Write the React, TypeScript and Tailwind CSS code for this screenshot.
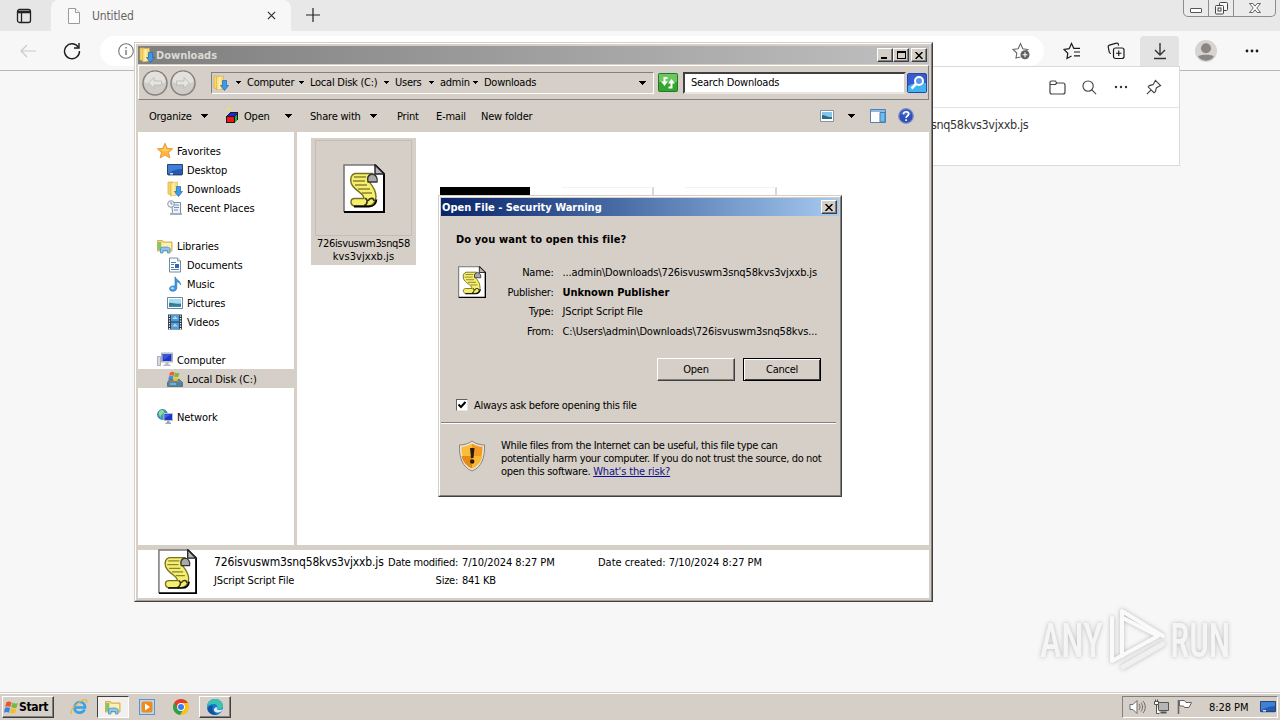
import React from "react";
import clsx from "clsx";

type IconProps = { className?: string };

/* ---------- shared icons ---------- */

function Caret({ className }: IconProps) {
  return (
    <svg viewBox="0 0 7 4" className={clsx("shrink-0", className)} shapeRendering="crispEdges">
      <path d="M0 0h7L3.500 4z" fill="#000" />
    </svg>
  );
}

function ScriptIcon({ className }: IconProps) {
  return (
    <svg viewBox="0 0 42 49" preserveAspectRatio="none" className={clsx("shrink-0", className)}>
      <path d="M1 1h31l9 9v38H1z" fill="#fff" />
      <path d="M32 1H1v47" fill="none" stroke="#777" strokeWidth="1.600" />
      <path d="M32 1l9 9v38H1" fill="none" stroke="#000" strokeWidth="2" />
      <path d="M32 1v9h9z" fill="#b8b8b8" stroke="#222" strokeWidth="1.400" />
      <path
        d="M12 9.500h16c-3 2-4 5-2 8 3 4 7 8 7 15 0 6-4 9.500-8 9.500H11c-4-1-4-7 0-7.500h10c0-6-11-8-13-16-1-5 1-8 4-9z"
        fill="#f5ef70"
        stroke="#77701f"
        strokeWidth="1.400"
      />
      <path d="M25 18c-1-4 0-7 4-8 4 0 6 5 5 8z" fill="#a9a9a9" stroke="#333" strokeWidth="1.300" />
      <path d="M11 13h12M10 17h12M12 21h12M15 25h12M19 29h10" stroke="#8a8330" strokeWidth="1.400" />
      <path d="M22 34.500c3 0 3 6-1 7M25 37c2-4 6-3 6 0" fill="none" stroke="#3a3510" strokeWidth="1.600" />
      <path d="M11 42.500h15c5 0 7-3 7.500-7" fill="none" stroke="#000" strokeWidth="1.800" />
    </svg>
  );
}

function DownloadsIcon({ className }: IconProps) {
  return (
    <svg viewBox="0 0 16 16" className={clsx("shrink-0", className)}>
      <path d="M1 1h5v13l-5-1z" fill="#f7d76c" stroke="#d5ac3d" strokeWidth=".7" />
      <path d="M3.500 2l7-1v13l-7 1z" fill="#f8dc7c" stroke="#cfa840" strokeWidth=".5" />
      <path d="M5.500 2l2-.3V14l-2 .6z" fill="#fff0ae" />
      <path d="M9.500 5.500h4v5h2L11.500 15.500l-4-5h2z" fill="#3c9be6" stroke="#1d66b1" strokeWidth=".7" />
    </svg>
  );
}

function LibraryIcon({ className }: IconProps) {
  return (
    <svg viewBox="0 0 16 16" className={clsx("shrink-0", className)}>
      <path d="M.5 2.500h5l1 1.500h8.500v9H.5z" fill="#f5d774" stroke="#c8a23c" strokeWidth=".8" />
      <path d="M1 4h3v8H1z" fill="#7dc67a" />
      <path d="M5 5h9v6H5z" fill="#fdf0b4" />
      <path d="M3.500 15V10.500c0-2 9.500-2 9.500 0V15h-2.500v-2.500H6V15z" fill="#8cc7ea" stroke="#4a8fc2" strokeWidth=".8" />
    </svg>
  );
}

function MonitorIcon({ className }: IconProps) {
  return (
    <svg viewBox="0 0 16 16" className={clsx("shrink-0", className)}>
      <path d="M.5 2.500h15v10H.5z" fill="#2459b4" stroke="#2c4468" />
      <path d="M1 3h14v4C9 7 4 9 1 12z" fill="#3f7fd6" />
      <path d="M3 11h3v1.500H3z" fill="#cfe3fb" />
      <path d="M1 13.500h14" stroke="#9fb4cb" />
    </svg>
  );
}

/* ---------- sidebar ---------- */

function StarIcon({ className }: IconProps) {
  return (
    <svg viewBox="0 0 16 16" className={clsx("shrink-0", className)}>
      <path
        d="M8 .3l2.200 5 5.500.5-4.100 3.700 1.300 5.500L8 12.100l-4.900 2.900 1.300-5.500L.3 5.800l5.500-.5z"
        fill="#fcb93a"
        stroke="#e08d33"
        strokeWidth=".8"
      />
      <path d="M8 2.500l1.300 3.900 3.800.4L8 8.500 4 7l2.500-.6z" fill="#ffd062" />
    </svg>
  );
}

function RecentIcon({ className }: IconProps) {
  return (
    <svg viewBox="0 0 16 16" className={clsx("shrink-0", className)}>
      <path d="M4.500 2.500h9v12H4l1.500-2.500z" fill="#eef3f8" stroke="#7b8ea3" />
      <path d="M7 5h5M7 7.500h5M7 10h4" stroke="#6d94bd" />
      <path d="M3 13h12v2H3z" fill="#9fb0c1" />
      <circle cx="4" cy="4" r="3.300" fill="#f5f8fb" stroke="#8496a8" />
      <path d="M4 2v2h1.500" fill="none" stroke="#56687b" strokeWidth=".8" />
    </svg>
  );
}

function DocumentIcon({ className }: IconProps) {
  return (
    <svg viewBox="0 0 16 16" className={clsx("shrink-0", className)}>
      <path d="M2.500 1h8l3 3v11h-11z" fill="#fff" stroke="#6f8ba8" />
      <path d="M10.500 1v3h3" fill="#d5e3f1" stroke="#6f8ba8" strokeWidth=".8" />
      <path d="M4 5.500h5M4 7.500h3M4 10.500h3M4 12.500h8" stroke="#4f7fb5" />
      <path d="M8 7h4v4H8z" fill="#2f67ad" />
    </svg>
  );
}

function MusicIcon({ className }: IconProps) {
  return (
    <svg viewBox="0 0 16 16" className={clsx("shrink-0", className)}>
      <path d="M8 .8c.8 3 5.500 3.500 5.500 8-.7-2-2-2.800-3.700-3V12c0 4-7.300 4.500-7.300.8C2.500 10 6 9.500 8 10.200z" fill="#3d9ae2" stroke="#2069b0" strokeWidth=".6" />
      <ellipse cx="5.500" cy="12.300" rx="1.700" ry="1" fill="#b5e1ff" />
    </svg>
  );
}

function PictureIcon({ className }: IconProps) {
  return (
    <svg viewBox="0 0 16 16" className={clsx("shrink-0", className)}>
      <path d="M.5 2.500h15v11H.5z" fill="#fff" stroke="#6d86a0" />
      <path d="M2 4h12v8H2z" fill="#a5dbf3" />
      <path d="M2 8c3-1 5 1.500 12 .5V12H2z" fill="#2f7c8c" />
      <path d="M2 10.500h12V12H2z" fill="#3f8ab5" />
    </svg>
  );
}

function VideoIcon({ className }: IconProps) {
  return (
    <svg viewBox="0 0 16 16" className={clsx("shrink-0", className)}>
      <path d="M1 .5h14v15H1z" fill="#2b3440" />
      <path d="M4 1h8v6.500H4zM4 8.500h8V15H4z" fill="#4c9ddd" />
      <path d="M5 5l3-3 3 3zM5 12.500l3-3 3 3z" fill="#a8d6f5" />
      <path d="M2.500 1.500v14M13.500 1.500v14" stroke="#fff" strokeWidth="1.300" strokeDasharray="1.200 1.300" />
    </svg>
  );
}

function ComputerIcon({ className }: IconProps) {
  return (
    <svg viewBox="0 0 16 16" className={clsx("shrink-0", className)}>
      <path d="M.5 4.500h3v9h-3z" fill="#d8dce2" stroke="#8b939d" strokeWidth=".7" />
      <path d="M4.500 1h11v9h-11z" fill="#d6dbe5" stroke="#a5adba" />
      <path d="M5.500 2h9v7h-9z" fill="#1e36c4" />
      <path d="M5.500 2h9L7 8z" fill="#3c56da" />
      <path d="M8.500 10.500h3v2h2V14h-7v-1.500h2z" fill="#b3bac5" />
    </svg>
  );
}

function DiskIcon({ className }: IconProps) {
  return (
    <svg viewBox="0 0 16 16" className={clsx("shrink-0", className)}>
      <path d="M2.500 8.500h10l3 3v4H.5v-4z" fill="#74838f" stroke="#4c5963" strokeWidth=".7" />
      <path d="M1 11.500h14v3.500H1z" fill="#4388a5" />
      <path d="M3 13h6" stroke="#a7d9ee" />
      <path d="M3 1.500c2-1 3-1 4.500 0L6.500 5c-1.500-1-3-1-4.500 0z" fill="#e7632f" />
      <path d="M8 1.500c1.500 1 3 1 4.500.3L11.500 5.500c-1.500.7-3 .7-4.500 0z" fill="#7fbb3b" />
      <path d="M2 5.500c1.500-1 3-1 4.500 0l-1 3.300c-1.500-1-3-1-4.500 0z" fill="#3f8fde" />
      <path d="M7 6c1.500 1 3 1 4.500.3l-1 3.200C9 10 7.500 10 6 9.200z" fill="#f6c12f" />
    </svg>
  );
}

function NetworkIcon({ className }: IconProps) {
  return (
    <svg viewBox="0 0 16 16" className={clsx("shrink-0", className)}>
      <circle cx="5.500" cy="5.500" r="5" fill="#3b9fbf" stroke="#2b6c8e" strokeWidth=".7" />
      <path d="M2 3c2-3 5-2 5 0s-3 2-3 4-3-1-2-4z" fill="#8fdc92" />
      <path d="M7 4.500h8.500v7H7z" fill="#1f34c9" stroke="#b7c0cf" />
      <path d="M8 5.500h6L8 9z" fill="#4760e2" />
      <path d="M10 12h2.500v1.500H14V15H8.500v-1.500H10z" fill="#9ba7b7" />
    </svg>
  );
}

type NavItem = { label: string; icon: React.FC<IconProps>; child?: boolean; selected?: boolean };

const navGroups: NavItem[][] = [
  [
    { label: "Favorites", icon: StarIcon },
    { label: "Desktop", icon: MonitorIcon, child: true },
    { label: "Downloads", icon: DownloadsIcon, child: true },
    { label: "Recent Places", icon: RecentIcon, child: true },
  ],
  [
    { label: "Libraries", icon: LibraryIcon },
    { label: "Documents", icon: DocumentIcon, child: true },
    { label: "Music", icon: MusicIcon, child: true },
    { label: "Pictures", icon: PictureIcon, child: true },
    { label: "Videos", icon: VideoIcon, child: true },
  ],
  [
    { label: "Computer", icon: ComputerIcon },
    { label: "Local Disk (C:)", icon: DiskIcon, child: true, selected: true },
  ],
  [{ label: "Network", icon: NetworkIcon }],
];

function Sidebar() {
  return (
    <div className="w-[156px] shrink-0 bg-white pt-[9px] flex flex-col gap-[19px] tracking-[-0.1px]">
      {navGroups.map((group) => (
        <div key={group[0].label}>
          {group.map(({ label, icon: Icon, child, selected }) => (
            <div
              key={label}
              className={clsx(
                "h-[19px] flex items-center gap-1",
                child ? "pl-[29px]" : "pl-[19px]",
                selected && "bg-[#d5cfc7]"
              )}
            >
              <Icon className="w-4 h-4" />
              <span className="pt-px">{label}</span>
            </div>
          ))}
        </div>
      ))}
    </div>
  );
}

/* ---------- browser in the background ---------- */

function BrowserTabs() {
  return (
    <div className="h-[31px] flex bg-[#e8e8e8]">
      <div className="w-[51px] pl-4 pt-2 bg-[#e6e6e6] rounded-br-lg">
        <svg viewBox="0 0 16 16" className="w-4 h-4" fill="none" stroke="#222" strokeWidth="1.300">
          <rect x="1.500" y="1.500" width="13" height="13" rx="2" />
          <path d="M2 4h12" strokeWidth="2.600" />
          <path d="M5.500 5v9" />
        </svg>
      </div>
      <div className="w-[240px] h-full bg-[#f7f7f7] rounded-t-lg flex items-center pl-4 pr-[15px]">
        <svg viewBox="0 0 14 16" className="w-[14px] h-4" fill="#fcfcfc" stroke="#9b9b9b">
          <path d="M1.500.5h7l4 4v11h-11z" />
          <path d="M8.500.5v4h4" />
        </svg>
        <span className="ml-[11px] text-[12px] text-[#666] tracking-[-0.12px] pt-px">Untitled</span>
        <svg viewBox="0 0 10 10" className="w-[9px] h-[9px] ml-auto" stroke="#333" strokeWidth="1.400">
          <path d="M1 1l8 8M9 1l-8 8" />
        </svg>
      </div>
      <svg viewBox="0 0 14 14" className="w-[14px] h-[14px] ml-[15px] mt-2" stroke="#222" strokeWidth="1.200">
        <path d="M7 0v14M0 7h14" />
      </svg>
      <div className="ml-auto mr-1 w-[93px] h-[17px] flex border border-t-0 border-[#8d8d8d] rounded-b-[5px] bg-[#ebebeb]">
        <div className="w-[25px] border-r border-[#8d8d8d] flex items-end justify-center pb-[3px]">
          <div className="w-3 h-[5px] border border-[#555] rounded-[1px] bg-white" />
        </div>
        <div className="w-[25px] border-r border-[#8d8d8d] flex items-center justify-center">
          <svg viewBox="0 0 13 13" className="w-[13px] h-[13px]" fill="#f8f8f8" stroke="#444">
            <rect x="4.500" y=".5" width="8" height="8" rx="1" />
            <rect x=".5" y="3.500" width="8" height="8.500" rx="1" />
            <rect x="3" y="6" width="3" height="3" />
          </svg>
        </div>
        <div className="flex-1 flex items-center justify-center">
          <svg viewBox="0 0 12 10" className="w-3 h-[10px]" fill="#fff" stroke="#555" strokeWidth=".9">
            <path d="M.5.5h3.300L6 3.200 8.200.5h3.300L7.800 5l3.700 4.500H8.200L6 6.800 3.800 9.500H.5L4.200 5z" />
          </svg>
        </div>
      </div>
    </div>
  );
}

function BrowserToolbar() {
  return (
    <div className="h-[40px] flex items-center bg-[#f7f7f7] border-b border-[#b9b9b9] shrink-0">
      <svg viewBox="0 0 16 14" className="w-4 h-[14px] ml-5" fill="none" stroke="#c9c9c9" strokeWidth="1.200">
        <path d="M16 7H1M7 1L1 7l6 6" />
      </svg>
      <svg viewBox="0 0 18 18" className="w-[18px] h-[18px] ml-[27px]" fill="none" stroke="#1b1b1b" strokeWidth="1.400">
        <path d="M15.500 5.500A7.500 7.500 0 1 0 16.500 9" />
        <path d="M16 1v5h-5" />
      </svg>
      <div className="ml-[19px] w-[944px] h-[30px] rounded-full bg-white flex items-center justify-between pl-[18px] pr-[14px]">
        <svg viewBox="0 0 16 16" className="w-4 h-4" fill="none" stroke="#777" strokeWidth="1.100">
          <circle cx="8" cy="8" r="7.300" />
          <path d="M8 7v5M8 4v1.500" strokeWidth="1.400" />
        </svg>
        <svg viewBox="0 0 18 18" className="w-[18px] h-[18px]" fill="none" stroke="#666" strokeWidth="1.100">
          <path d="M8.500 15l-4.500 1 .8-5L1 7.500l5.200-.8L8.500 1.500l2.300 5.200 5 .8-1.500 1.400" />
          <circle cx="13" cy="12.800" r="4.500" fill="#5f5f5f" stroke="none" />
          <path d="M13 10.300v5M10.500 12.800h5" stroke="#fff" />
        </svg>
      </div>
      <svg viewBox="0 0 18 18" className="w-[18px] h-[18px] ml-[19px]" fill="none" stroke="#1b1b1b" strokeWidth="1.200">
        <path d="M8.500 14L4 16.500l.8-5.300L1 7.500l5.200-.8 2.300-5.200 2.300 4.800H17M11 10h6M11 13.800h6" />
      </svg>
      <svg viewBox="0 0 18 18" className="w-[18px] h-[18px] ml-[26px]" fill="none" stroke="#1b1b1b" strokeWidth="1.200">
        <path d="M4 11.500c-1 0-1.500-.5-1.700-1.300L1.200 5c-.2-1 .2-1.600 1.200-1.900l7-1.900c1-.3 1.700.2 1.900 1l.3 1.500" />
        <rect x="6.500" y="6" width="10.500" height="10.500" rx="2" />
        <path d="M11.750 8.500v5.500M9 11.250h5.500" />
      </svg>
      <div className="ml-[15px] w-[39px] h-[30px] bg-[#e3e3e3] rounded-t flex items-center justify-center">
        <svg viewBox="0 0 14 18" className="w-[14px] h-[18px]" fill="none" stroke="#333" strokeWidth="1.400">
          <path d="M7 1v12M2 8l5 5 5-5M1 16.500h12" />
        </svg>
      </div>
      <svg viewBox="0 0 24 24" className="w-[22px] h-[22px] ml-4">
        <circle cx="12" cy="12" r="12" fill="#d6d3d0" />
        <circle cx="12" cy="9" r="5.500" fill="#8a8682" />
        <path d="M3.500 18c1-2.500 16-2.500 17 0-3 6-14 6-17 0z" fill="#8a8682" />
      </svg>
      <svg viewBox="0 0 14 4" className="w-[14px] h-1 ml-7" fill="#1b1b1b">
        <circle cx="2" cy="2" r="1.400" />
        <circle cx="7" cy="2" r="1.400" />
        <circle cx="12" cy="2" r="1.400" />
      </svg>
    </div>
  );
}

function DownloadsPopup() {
  return (
    <div className="absolute left-[899px] top-[66px] w-[281px] h-[100px] bg-white border border-[#dadada] flex flex-col">
      <div className="h-[41px] border-b border-[#e2e2e2] flex items-center justify-end gap-4 pr-[17px] text-[#444]">
        <svg viewBox="0 0 17 17" className="w-[17px] h-[17px]" fill="none" stroke="currentColor" strokeWidth="1.200">
          <path d="M1 3.500C1 2 2 2 2.500 2h3.800l1.500 2H14c1.500 0 2 .7 2 2v7c0 1.400-.6 2-2 2H3c-1.400 0-2-.6-2-2zM1 5.500h5.500L7.800 4" />
        </svg>
        <svg viewBox="0 0 16 16" className="w-[15px] h-[15px]" fill="none" stroke="currentColor" strokeWidth="1.200">
          <circle cx="6.500" cy="6.500" r="5.500" />
          <path d="M10.500 10.500L15 15" />
        </svg>
        <svg viewBox="0 0 16 4" className="w-4 h-1" fill="#333">
          <circle cx="3" cy="2" r="1.200" />
          <circle cx="8" cy="2" r="1.200" />
          <circle cx="13" cy="2" r="1.200" />
        </svg>
        <svg viewBox="0 0 18 18" className="w-[17px] h-[17px]" fill="none" stroke="currentColor" strokeWidth="1.200">
          <path d="M11 1.500L16.500 7l-2 1-2.500 1.500-1 4-1.500 1L3.500 8.500l1-1.500 4-1L10 3.500zM6.500 11.500L2 16" />
        </svg>
      </div>
      <p className="pl-[31px] pt-2 text-[12.5px] leading-[18px] text-[#333] tracking-[-0.36px]">snq58kvs3vjxxb.js</p>
    </div>
  );
}

/* ---------- explorer window ---------- */

const raised = "border border-t-white border-l-white border-r-[#404040] border-b-[#404040] bg-[#d5cfc7]";

function TitleButton({ children, className }: { children: React.ReactNode; className?: string }) {
  return (
    <button className={clsx(raised, "w-4 h-[14px] flex justify-center shadow-[inset_-1px_-1px_0_#808080]", className)}>
      {children}
    </button>
  );
}

function CloseGlyph() {
  return (
    <svg viewBox="0 0 8 7" className="w-2 h-[7px]" stroke="#000" strokeWidth="1.500">
      <path d="M.5 0l7 7M7.500 0l-7 7" />
    </svg>
  );
}

function RoundButton({ flip }: { flip?: boolean }) {
  return (
    <svg viewBox="0 0 26 26" className={clsx("w-[26px] h-[26px]", flip && "-scale-x-100")}>
      <circle cx="13" cy="13" r="12" fill="#cfccc7" stroke="#84817d" strokeWidth="1.500" />
      <path d="M2.500 12a10.500 10.500 0 0 1 21 0c-6 3-15 3-21 0z" fill="#e3e1de" />
      <path d="M12 7.500L6.500 13l5.500 5.500v-3.500h7.500v-4H12z" fill="#e6e4e0" stroke="#b9b6b1" strokeWidth=".8" />
    </svg>
  );
}

const crumbs = [
  { label: "Computer", width: "w-[63px]" },
  { label: "Local Disk (C:)", width: "w-[85px]" },
  { label: "Users", width: "w-[45px]" },
  { label: "admin", width: "w-[44px]" },
  { label: "Downloads", width: "w-[60px]" },
];

function AddressRow() {
  return (
    <div className="h-[35px] flex items-center border border-t-white border-l-white border-r-[#808080] border-b-[#808080] pl-[3px] pr-px">
      <RoundButton />
      <div className="ml-[2px]">
        <RoundButton flip />
      </div>
      <div className="ml-[15px] w-[443px] h-[22px] border border-t-[#808080] border-l-[#808080] border-r-white border-b-white flex items-center pl-px">
        <DownloadsIcon className="w-4 h-4" />
        <div className="flex items-center ml-[7px] tracking-[-0.25px]">
          {crumbs.map((c) => (
            <div key={c.label} className={clsx("flex items-center whitespace-nowrap", c.width)}>
              <Caret className="w-[5px] h-[3px]" />
              <span className="ml-[6px]">{c.label}</span>
            </div>
          ))}
        </div>
        <Caret className="w-[7px] h-1 ml-auto mr-[7px]" />
      </div>
      <svg viewBox="0 0 20 19" className="w-5 h-[19px] ml-[4px]">
        <rect x=".5" y=".5" width="19" height="18" rx="1" fill="#35a52f" stroke="#1f7a22" />
        <path d="M1 1h18v8H1z" fill="#6cc760" />
        <path d="M9.500 5H6.500v5" fill="none" stroke="#fff" strokeWidth="2" />
        <path d="M3 8.500h7L6.500 13z" fill="#fff" />
        <path d="M10.500 14.500h3V10" fill="none" stroke="#fff" strokeWidth="2" />
        <path d="M10 10.500h7L13.500 6z" fill="#fff" />
      </svg>
      <div className="ml-[5px] flex-1 h-[22px] bg-white border-2 border-t-[#404040] border-l-[#404040] border-r-[#d5cfc7] border-b-[#e9e6e1] flex items-center pl-[6px] tracking-[-0.2px]">
        Search Downloads
      </div>
      <svg viewBox="0 0 20 20" className="w-5 h-5 ml-px">
        <rect x=".5" y=".5" width="19" height="19" rx="1.500" fill="#2f74dd" stroke="#2446a5" />
        <path d="M1 10h18v9H1z" fill="#3fb4f0" />
        <path d="M1 1h18v9c-6-2-12 0-18 3z" fill="#3a5bd0" />
        <circle cx="12" cy="8" r="4" fill="#5d94ee" stroke="#fff" strokeWidth="2" />
        <path d="M9 11l-4.500 4.500" stroke="#fff" strokeWidth="2.500" />
      </svg>
    </div>
  );
}

function CommandBar() {
  return (
    <div className="h-[32px] flex items-center pl-[11px] pr-[15px] whitespace-nowrap tracking-[-0.2px]">
      <span className="w-[52px]">Organize</span>
      <Caret className="w-[7px] h-1" />
      <svg viewBox="0 0 15 16" className="w-[15px] h-4 ml-[17px] mr-1" shapeRendering="crispEdges">
        <path d="M1 8l4-4h8v7l-3 4H1z" fill="#1a1a1a" />
        <path d="M2 9h7v5H2z" fill="#f01414" />
        <path d="M2 8l3-3h7l-2 3z" fill="#1c28e0" />
        <path d="M10 9l2-3v6l-2 2z" fill="#18b43a" />
        <path d="M3 0h2v2H3zM6 2h1v1H6zM1 2h1v1H1z" fill="#f2ea3a" />
      </svg>
      <span className="w-[41px]">Open</span>
      <Caret className="w-[7px] h-1" />
      <span className="ml-[18px] w-[60px]">Share with</span>
      <Caret className="w-[7px] h-1" />
      <span className="ml-5 w-[39px]">Print</span>
      <span className="w-[45px]">E-mail</span>
      <span>New folder</span>
      <svg viewBox="0 0 14 12" className="w-[14px] h-3 ml-auto">
        <path d="M.5.5h13v11H.5z" fill="#fff" stroke="#8794a4" />
        <path d="M2 2h10v7H2z" fill="#85c3ea" />
        <path d="M2 5c3 0 6 3 10 2v2H2z" fill="#2b6a7d" />
      </svg>
      <Caret className="w-[7px] h-1 ml-[14px]" />
      <svg viewBox="0 0 16 14" className="w-4 h-[14px] ml-[15px]">
        <path d="M.5.5h15v13H.5z" fill="#fdfdfd" stroke="#5480b0" />
        <path d="M1 1h14v2H1z" fill="#8eb9e3" />
        <path d="M10 3.500h5V13h-5z" fill="#74bce8" stroke="#3c80b8" />
      </svg>
      <svg viewBox="0 0 16 16" className="w-4 h-4 ml-3">
        <circle cx="8" cy="8" r="7.300" fill="#2e50b8" stroke="#7d92c4" strokeWidth="1.200" />
        <path d="M2.500 6a6 6 0 0 1 11 0c-3 2-8 2-11 0z" fill="#4a6bd0" />
        <path d="M5.500 6.300c0-3.500 5.200-3.200 5.200-.2 0 2-2.600 1.900-2.600 3.800M8.100 11.200v1.700" fill="none" stroke="#fff" strokeWidth="1.700" />
      </svg>
    </div>
  );
}

function FileList() {
  return (
    <div className="flex-1 bg-white relative pl-[14px] pt-[6px]">
      <div className="w-[105px] h-[127px] bg-[#d5cfc7] px-[3px] pt-[2px] flex flex-col items-center">
        <div className="w-[97px] h-[96px] border border-[#c2bdb5] flex items-center justify-center">
          <ScriptIcon className="w-[42px] h-[49px]" />
        </div>
        <p className="text-center leading-[13px] pt-px whitespace-nowrap tracking-[-0.35px]">
          726isvuswm3snq58
          <br />
          <span className="tracking-[0.05px]">kvs3vjxxb.js</span>
        </p>
      </div>
      {/* thumbnails peeking out above the dialog */}
      <div className="absolute left-[143px] top-[55px] flex">
        <div className="w-[90px] h-5 bg-black" />
        <div className="ml-8 w-[92px] h-5 border-r-2 border-[#d8d8d8] border-t border-t-[#f3f3f3]" />
        <div className="ml-[31px] w-[92px] h-5 border-r-2 border-[#d8d8d8] border-t border-t-[#f3f3f3]" />
      </div>
    </div>
  );
}

function DetailsPane() {
  return (
    <div className="h-[48px] bg-white flex pl-[20px]">
      <ScriptIcon className="w-[39px] h-[45px] -mt-px" />
      <div className="ml-[17px] w-[174px] whitespace-nowrap">
        <p className="text-[12px] leading-[18px] pt-[3px] tracking-[-0.14px]">726isvuswm3snq58kvs3vjxxb.js</p>
        <p className="leading-[18px] pt-px tracking-[-0.15px]">JScript Script File</p>
      </div>
      <div className="grid grid-cols-[70px_1fr] gap-x-1 leading-[18px] pt-[4px] whitespace-nowrap w-[210px] content-start">
        <span className="text-right">Date modified:</span>
        <span className="tracking-[-0.06px]">7/10/2024 8:27 PM</span>
        <span className="text-right">Size:</span>
        <span>841 KB</span>
      </div>
      <p className="leading-[18px] pt-[4px] tracking-[-0.02px]">Date created: 7/10/2024 8:27 PM</p>
    </div>
  );
}

function ExplorerWindow() {
  return (
    <div className="absolute left-[134px] top-[42px] w-[799px] h-[560px] bg-[#d5cfc7] border border-t-[#d5cfc7] border-l-[#d5cfc7] border-r-[#404040] border-b-[#404040]">
      <div className="w-full h-full border border-t-white border-l-white border-r-[#808080] border-b-[#a5a19b] p-0.5 flex flex-col">
        <div className="h-[18px] shrink-0 flex items-center bg-linear-to-r from-[#7f7f7f] to-[#c0c0c0] pl-px pr-[2px]">
          <DownloadsIcon className="w-4 h-4" />
          <span className="ml-px font-bold text-[#dcd9d4] tracking-normal">Downloads</span>
          <TitleButton className="ml-auto items-end pb-[2px]">
            <div className="w-[6px] h-[2px] bg-black mr-[2px]" />
          </TitleButton>
          <TitleButton className="items-center">
            <div className="w-[9px] h-[8px] border border-t-2 border-black" />
          </TitleButton>
          <TitleButton className="items-center ml-[2px]">
            <CloseGlyph />
          </TitleButton>
        </div>
        <div className="h-px shrink-0" />
        <AddressRow />
        <CommandBar />
        <div className="flex flex-1 min-h-0">
          <Sidebar />
          <div className="w-[3px] bg-[#d5cfc7]" />
          <FileList />
        </div>
        <div className="h-[5px] shrink-0" />
        <DetailsPane />
      </div>
    </div>
  );
}

/* ---------- security warning ---------- */

const fields = [
  { label: "Name:", value: "...admin\\Downloads\\726isvuswm3snq58kvs3vjxxb.js", tracking: "tracking-[-0.13px]" },
  { label: "Publisher:", value: "Unknown Publisher", tracking: "font-bold tracking-[-0.06px]" },
  { label: "Type:", value: "JScript Script File", tracking: "tracking-[-0.15px]" },
  { label: "From:", value: "C:\\Users\\admin\\Downloads\\726isvuswm3snq58kvs...", tracking: "tracking-[-0.14px]" },
];

function SecurityDialog() {
  return (
    <div className="absolute left-[438px] top-[195px] w-[404px] h-[302px] bg-[#d5cfc7] border border-t-[#d5cfc7] border-l-[#d5cfc7] border-r-[#404040] border-b-[#404040]">
      <div className="w-full h-full border border-t-white border-l-white border-r-[#808080] border-b-[#808080] p-px flex flex-col">
        <div className="h-[18px] shrink-0 flex items-center bg-linear-to-r from-[#0a246a] to-[#a6caf0] pl-px pr-[2px] text-white font-bold tracking-[-0.02px]">
          Open File - Security Warning
          <TitleButton className="items-center ml-auto">
            <CloseGlyph />
          </TitleButton>
        </div>

        <div className="pl-[15px] pr-[18px]">
          <h1 className="font-bold leading-[14px] pt-[17px] pb-px tracking-[0.1px]">Do you want to open this file?</h1>
          <div className="flex mt-[15px]">
            <ScriptIcon className="w-7 h-8 ml-[2px] mt-[3px]" />
            <div className="grid grid-cols-[67.5px_1fr] gap-x-[9px] leading-[19.500px] whitespace-nowrap">
              {fields.map((f) => (
                <React.Fragment key={f.label}>
                  <span className="text-right">{f.label}</span>
                  <span className={f.tracking}>{f.value}</span>
                </React.Fragment>
              ))}
            </div>
          </div>
          <div className="flex justify-end gap-2 mt-[17px]">
            <button className={clsx(raised, "w-[78px] h-[23px] shadow-[inset_-1px_-1px_0_#808080]")}>Open</button>
            <button className="w-[78px] h-[23px] border border-black shadow-[inset_1px_1px_0_#fff,inset_-1px_-1px_0_#404040]">
              Cancel
            </button>
          </div>
          <label className="flex items-center mt-[17px] h-[14px]">
            <span className="w-3 h-3 bg-white border border-t-[#606060] border-l-[#606060] border-r-[#e8e5e0] border-b-[#e8e5e0] flex items-center justify-center">
              <svg viewBox="0 0 8 8" className="w-2 h-2" fill="none" stroke="#000" strokeWidth="2">
                <path d="M.5 3.500L3 6l4.500-5" />
              </svg>
            </span>
            <span className="ml-[6px] tracking-[-0.28px]">Always ask before opening this file</span>
          </label>
        </div>

        <div className="mt-[10px] h-[2px] mr-[3px] border-t border-[#808080] border-b border-b-white shrink-0" />

        <div className="flex pl-[17px] pt-[15px]">
          <svg viewBox="0 0 28 32" className="w-7 h-8 mt-px shrink-0">
            <path d="M14 1c3 2.500 8 4 12.500 4C27 17 24 27 14 31 4 27 1 17 1.500 5 6 5 11 3.500 14 1z" fill="#e9e6df" stroke="#8c8373" />
            <path d="M14 3.500c3 2 7 3.200 10.500 3.300C24.700 16 22 25 14 28.500z" fill="#f39a22" />
            <path d="M14 3.500c-3 2-7 3.200-10.500 3.300C3.300 16 6 25 14 28.500z" fill="#f9bd3a" />
            <path d="M3.500 16h10.500v12.500C8 26 4.500 21 3.500 16z" fill="#e58a12" />
            <path d="M14 16h10.500c-1 5-4.500 10-10.500 12.500z" fill="#f8b832" />
            <path d="M12 8h4.500l-1 10h-2.500z" fill="#2a1c0c" />
            <circle cx="14.200" cy="21.500" r="2.200" fill="#2a1c0c" />
          </svg>
          <p className="ml-[15px] leading-[13px] whitespace-nowrap tracking-[-0.36px]">
            <span className="tracking-[-0.33px]">While files from the Internet can be useful, this file type can</span>
            <br />
            potentially harm your computer. If you do not trust the source, do not
            <br />
            <span className="tracking-[-0.28px]">
              open this software. <a className="text-[#10108a] underline tracking-[-0.15px]">What's the risk?</a>
            </span>
          </p>
        </div>
      </div>
    </div>
  );
}

/* ---------- taskbar ---------- */

function Taskbar() {
  return (
    <div className="mt-auto h-[28px] border-t border-[#d5cfc7] bg-[#d5cfc7] shadow-[inset_0_1px_0_#fff] flex items-center pt-px px-[2px] shrink-0">
      <button className={clsx(raised, "w-[52px] h-[22px] flex items-center pl-px font-bold text-[12px] tracking-[-0.3px] shadow-[inset_-1px_-1px_0_#808080]")}>
        <svg viewBox="0 0 16 15" className="w-[15px] h-[15px] shrink-0">
          <path d="M2.500 2c2-1.200 3.500-1.200 5.500 0L6.800 7c-1.800-1-3.500-1-5.500 0z" fill="#e8572a" />
          <path d="M8.800 2.500c2 1 3.500 1 6 .2L13.500 7.500c-2 .8-3.800.8-5.700-.2z" fill="#78b83c" />
          <path d="M1 8c2-1 3.500-1 5.500 0l-1.200 5C3.500 12 2 12 0 13z" fill="#3b82dc" />
          <path d="M7.500 8.300c2 1 3.500 1 5.700.3L12 13.200c-2 .8-3.800.8-5.700-.2z" fill="#f5bd2b" />
        </svg>
        Start
      </button>
      <svg viewBox="0 0 18 18" className="w-[18px] h-[18px] ml-4">
        <path d="M4 9.500h11c0-7-10-7.500-10.500 0 0 6.500 8 6.500 10 2" fill="none" stroke="#35a2e6" strokeWidth="2.600" />
        <path d="M1.500 16C-1 11 13 0 16.500 2c1 .8.200 2-.5 3" fill="none" stroke="#e9b73d" strokeWidth="1.300" />
      </svg>
      <div className="ml-[9px] w-[32px] h-[22px] border border-t-[#404040] border-l-[#404040] border-r-white border-b-white bg-[#f2f0ed] flex items-center justify-center">
        <LibraryIcon className="w-4 h-4" />
      </div>
      <svg viewBox="0 0 16 16" className="w-4 h-4 ml-[10px]">
        <rect x=".5" y=".5" width="15" height="15" fill="#b9d7f1" stroke="#5e93c6" />
        <rect x="2.500" y="2.500" width="11" height="11" rx="2" fill="#f08a1d" />
        <path d="M6 4.500l5 3.500-5 3.500z" fill="#fff" />
      </svg>
      <svg viewBox="0 0 16 16" className="w-4 h-4 ml-[18px]">
        <circle cx="8" cy="8" r="8" fill="#fbc116" />
        <path d="M8 8L1.100 4A8 8 0 0 0 7 16l4-6.500z" fill="#2da04e" />
        <path d="M1.100 4A8 8 0 0 1 14.900 4H8L5 9z" fill="#e33b2e" />
        <circle cx="8" cy="8" r="3.900" fill="#fff" />
        <circle cx="8" cy="8" r="3" fill="#3b7ded" />
      </svg>
      <div className={clsx(raised, "ml-[10px] w-[32px] h-[22px] flex items-center justify-center shadow-[inset_-1px_-1px_0_#808080]")}>
        <svg viewBox="0 0 16 16" className="w-4 h-4">
          <circle cx="8" cy="8" r="8" fill="#1778cf" />
          <path d="M0 8C0 3 4 0 8 0c5 0 8 3.500 8 6.500 0 3-2.500 4-5 4-1.500 0-1.500-.8-1-1.500.8-1.500-.2-4-3-4C4 5 1 6 0 8z" fill="#3cc3b0" />
          <path d="M6 7c-2 3 0 8 5 8-5 2-10-1-10.500-5C2 7 4 6 6 7z" fill="#1251a0" />
          <path d="M9.500 8c1 1.500-.5 2.500 2 3 1.500.2 3 0 4.200-1-1 3-4 4-6.200 3.500C6 12.500 6 9 9.500 8z" fill="#d9eff7" />
        </svg>
      </div>
      <div className="ml-auto w-[156px] h-[22px] border border-t-[#808080] border-l-[#808080] border-r-white border-b-white flex items-center pl-[6px]">
        <svg viewBox="0 0 17 16" className="w-[17px] h-4" fill="none" stroke="#6b6b6b">
          <path d="M1 5.500h3l4-4v13l-4-4H1z" fill="#fff" />
          <path d="M10 5c1.300 2 1.300 4 0 6M12 3.500c2 3 2 6 0 9M14 2c3 4 3 8 0 12" />
        </svg>
        <svg viewBox="0 0 17 16" className="w-[17px] h-4 ml-[7px]" fill="#fff" stroke="#555">
          <path d="M5.500 3.500h10v8h-10z" fill="#b5b5b5" />
          <path d="M7.500 13.500h6" strokeWidth="2" />
          <path d="M1.500 2.500h4v3h-4zM2.500.5v2M4.500.5v2M3.500 5.500v9h3" />
        </svg>
        <svg viewBox="0 0 17 16" className="w-[17px] h-4 ml-[6px]" fill="#fff" stroke="#666">
          <path d="M2.500 1v14" strokeWidth="1.600" />
          <path d="M3.500 1.500h5l1.500 2h5.500l-2.500 5H8.500l-1-1.500h-4z" />
        </svg>
        <span className="ml-4 w-[51px] whitespace-nowrap tracking-[-0.05px]">8:28 PM</span>
        <MonitorIcon className="w-4 h-4" />
      </div>
    </div>
  );
}

function Watermark() {
  return (
    <div className="absolute left-[1038px] top-[608px] w-[200px] h-[66px] flex items-center justify-between pl-px pr-[6px] drop-shadow-[0_0_2px_#b8b8b8] text-[#f5f5f5] font-[Roboto,sans-serif] font-medium">
      <div className="w-[64px] flex justify-center">
        <span className="text-[49px] leading-[66px] tracking-normal scale-x-[0.74]">ANY</span>
      </div>
      <svg viewBox="0 0 60 66" className="w-[60px] h-[66px] shrink-0 -mt-1" fill="none" stroke="#fafafa" strokeLinecap="round" strokeLinejoin="round">
        <path d="M16 50V5l41 25" strokeWidth="4" />
        <path d="M6 12v43l46-25L17 12" strokeWidth="4" />
        <path d="M17 61l40-23" strokeWidth="5" stroke="#f0f0f0" />
      </svg>
      <div className="w-[63px] flex justify-center">
        <span className="text-[49px] leading-[66px] tracking-normal scale-x-[0.71]">RUN</span>
      </div>
    </div>
  );
}

export default function App() {
  return (
    <div className="relative w-[1280px] h-[720px] overflow-hidden flex flex-col bg-[#f7f7f7] text-black text-[11px] leading-[13px] tracking-[-0.25px] font-['DejaVu_Sans_Condensed','DejaVu_Sans',sans-serif] font-stretch-condensed">
      <BrowserTabs />
      <BrowserToolbar />
      <DownloadsPopup />
      <ExplorerWindow />
      <SecurityDialog />
      <Watermark />
      <Taskbar />
    </div>
  );
}
